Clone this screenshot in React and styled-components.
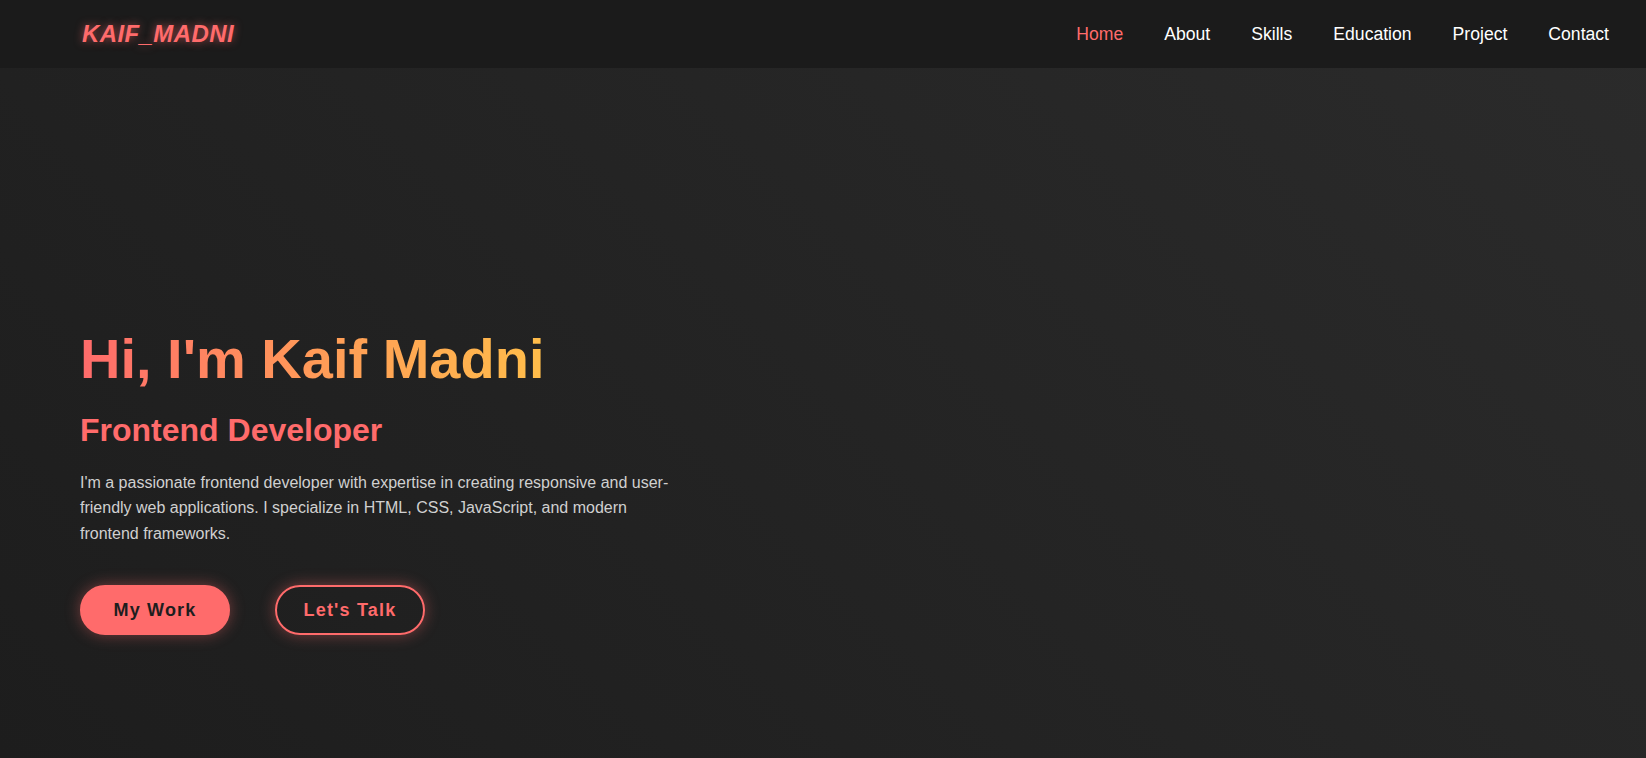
import React from 'react'
import styled, { createGlobalStyle } from 'styled-components'

const GlobalStyle = createGlobalStyle`
    * {
        box-sizing: border-box;
    }
    html, body {
        margin: 0;
        padding: 0;
    }
    body {
        font-family: "Liberation Sans", Arial, sans-serif;
        background: #1c1c1c;
        color: #fff;
    }
`;

const Page = styled.div`
    min-height: 100vh;
    background: linear-gradient(45deg, #1d1d1d 0%, #242424 50%, #2b2b2b 100%);
`;

const Header = styled.header`
    height: 68px;
    display: flex;
    align-items: center;
    justify-content: space-between;
    padding: 0 37px 0 82px;
    background: #1b1b1b;
`;

const Logo = styled.div`
    color: #ff6b6b;
    font-size: 24px;
    font-weight: 700;
    font-style: italic;
    letter-spacing: 0.4px;
    text-shadow: 0 0 8px rgba(255, 107, 107, 0.6);
`;

const Nav = styled.nav`
    display: flex;
    gap: 41px;
`;

const NavLink = styled.a`
    font-size: 17.6px;
    color: ${props => props.active ? '#ff6b6b' : '#ffffff'};
    text-decoration: none;
    cursor: pointer;
`;

const Hero = styled.section`
    padding: 257px 80px 0;
`;

const Title = styled.h1`
    display: inline-block;
    margin: 0 0 19px;
    font-size: 56px;
    line-height: 1.2;
    font-weight: 700;
    background: linear-gradient(90deg, #ff6b6b 0%, #ff9a58 50%, #ffbd4a 100%);
    -webkit-background-clip: text;
    background-clip: text;
    color: transparent;
`;

const Subtitle = styled.h2`
    margin: 0 0 20px;
    font-size: 32px;
    line-height: 1.2;
    font-weight: 700;
    color: #ff6b6b;
`;

const Intro = styled.p`
    margin: 0 0 39px;
    max-width: 600px;
    font-size: 16px;
    line-height: 1.6;
    color: #d0d0d0;
`;

const Buttons = styled.div`
    display: flex;
    gap: 45px;
`;

const Button = styled.a`
    display: inline-flex;
    align-items: center;
    justify-content: center;
    width: 150px;
    height: 50px;
    border-radius: 30px;
    font-size: 18px;
    font-weight: 700;
    letter-spacing: 1.2px;
    text-decoration: none;
    cursor: pointer;
    background: ${props => props.outline ? 'transparent' : '#ff6b6b'};
    color: ${props => props.outline ? '#ff6b6b' : '#1e1e1e'};
    border: 2px solid #ff6b6b;
    box-shadow: 0 0 15px rgba(255, 107, 107, 0.4);
`;

const links = ['Home', 'About', 'Skills', 'Education', 'Project', 'Contact']

const App = () => {
    return <>
    <GlobalStyle />
    <Page>
        <Header>
            <Logo>KAIF_MADNI</Logo>
            <Nav>
                {links.map((item, index) =>
                    <NavLink key={index} active={index === 0 ? 1 : 0}>{item}</NavLink>
                )}
            </Nav>
        </Header>
        <Hero>
            <Title>Hi, I'm Kaif Madni</Title>
            <Subtitle>Frontend Developer</Subtitle>
            <Intro>
                I'm a passionate frontend developer with expertise in creating responsive and user-friendly web applications. I specialize in HTML, CSS, JavaScript, and modern frontend frameworks.
            </Intro>
            <Buttons>
                <Button>My Work</Button>
                <Button outline={1}>Let's Talk</Button>
            </Buttons>
        </Hero>
    </Page>
    </>
}

export default App;
